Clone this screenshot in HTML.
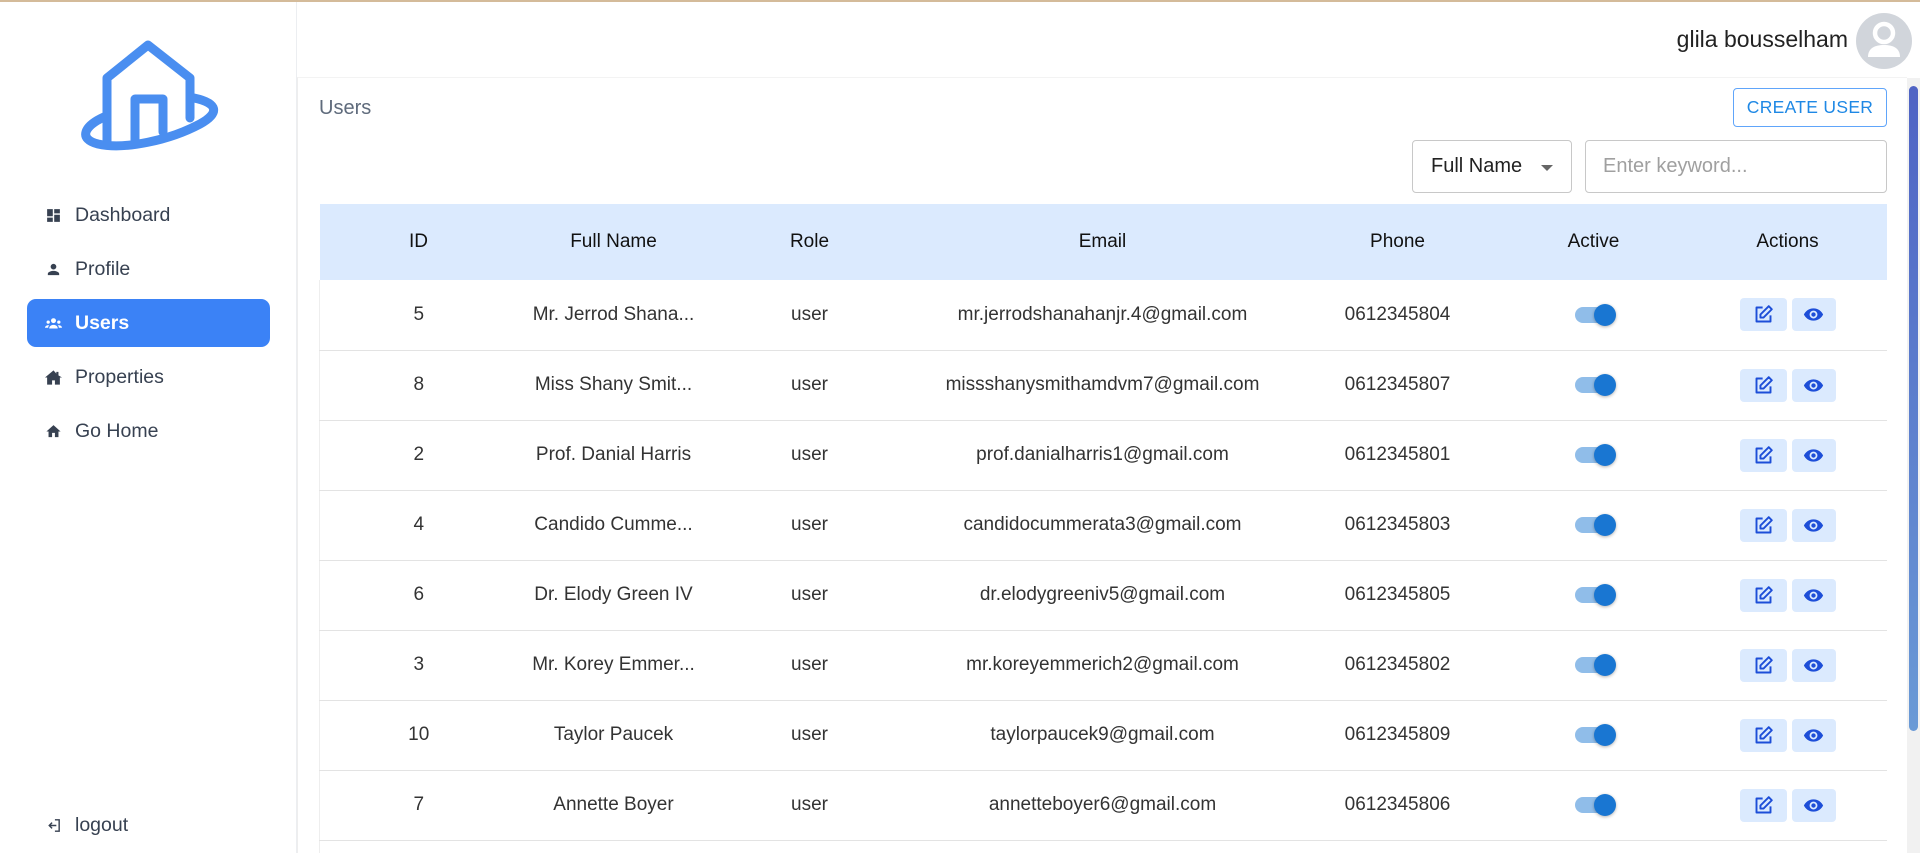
<!DOCTYPE html>
<html><head><meta charset="utf-8"><style>
*{box-sizing:border-box;margin:0;padding:0}
html,body{width:1920px;height:853px;overflow:hidden}
body{background:#fff;font-family:"Liberation Sans",sans-serif;position:relative}
.top{position:absolute;left:0;top:0;width:1920px;height:2px;background:#d4bb9a}
.side{position:absolute;left:0;top:2px;width:297px;height:851px;border-right:1px solid #eceef1;background:#fff}
.nav{position:absolute;left:27px;width:243px;height:48px;border-radius:9px;color:#374151;font-size:19.5px;display:flex;align-items:center;padding-left:18px}
.nav svg{width:17px;height:17px;margin-right:13px;fill:#374151}
.nav.act{background:#3b82f6;color:#fff;font-weight:bold}
.nav.act svg{fill:#fff}
.panel{position:absolute;left:297px;top:77px;width:1610px;height:776px;border-left:1px solid #eee;border-top:1px solid #f3f3f3}
.title{position:absolute;left:319px;top:97px;font-size:20px;color:#5f6b7c}
.btn{position:absolute;left:1733px;top:88px;width:154px;height:39px;border:1px solid #60a5fa;border-radius:4px;color:#1e88e5;font-size:17.5px;display:flex;align-items:center;justify-content:center;letter-spacing:.3px}
.sel{position:absolute;left:1412px;top:140px;width:160px;height:53px;border:1px solid #c8c8c8;border-radius:4px;font-size:20px;color:#222;padding:14px 0 0 18px}
.sel:after{content:"";position:absolute;right:18px;top:24px;border:6px solid transparent;border-top:6px solid #666}
.inp{position:absolute;left:1585px;top:140px;width:302px;height:53px;border:1px solid #c8c8c8;border-radius:4px;font-size:20px;color:#a0a0a0;padding:14px 0 0 17px}
.tw{position:absolute;left:319px;top:204px;width:1568px;height:649px;overflow:hidden}
table{width:1568px;border-collapse:collapse;table-layout:fixed;font-size:19px;color:#333}
thead tr{background:#dbeafe;height:76px}
th{font-weight:normal;color:#111;font-size:19px}
td{text-align:center;height:70px;border-bottom:1px solid #e3e3e3;white-space:nowrap}
tbody tr td:first-child{border-left:1px solid #eee}
.tg{display:inline-block;position:relative;width:38px;height:16px;border-radius:8px;background:#90bde9;vertical-align:middle}
.tg:after{content:"";position:absolute;right:-3px;top:-3px;width:22px;height:22px;border-radius:50%;background:#1976d2;box-shadow:0 1px 3px rgba(0,0,0,.3)}
.ab{display:inline-flex;align-items:center;justify-content:center;height:33px;background:#dbeafe;border-radius:4px;vertical-align:middle}
.ab svg{width:21px;height:21px}
.sb{position:absolute;left:1907px;top:78px;width:13px;height:775px;background:#f1f1f1}
.sb div{position:absolute;left:2px;top:8px;width:9px;height:645px;border-radius:5px;background:linear-gradient(#4f63c4,#6a9ad6)}
</style></head><body>
<div class="top"></div>
<div class="side">
<svg style="position:absolute;left:0;top:-2px" width="297" height="200" viewBox="0 0 297 200">
<g fill="none" stroke="#4a8ef0" stroke-width="9" stroke-linejoin="round" stroke-linecap="round">
<path d="M107 142 V78 L148 45 L190 78 V118"/>
<path d="M135 140 V99 H163 V132"/>
<path d="M194 98 C218 103 220 113 200 124 C170 140 125 150 98 144 C78 139 84 126 104 117"/>
</g></svg>
<div class="nav" style="top:189px"><svg viewBox="0 0 24 24"><path d="M3 13h8V3H3zm0 8h8v-6H3zm10 0h8V11h-8zm0-18v6h8V3z"/></svg>Dashboard</div>
<div class="nav" style="top:243px"><svg viewBox="0 0 24 24"><path d="M12 12c2.2 0 4-1.8 4-4s-1.8-4-4-4-4 1.8-4 4 1.8 4 4 4zm0 2c-2.7 0-8 1.3-8 4v2h16v-2c0-2.7-5.3-4-8-4z"/></svg>Profile</div>
<div class="nav act" style="top:297px"><svg viewBox="0 0 24 24"><circle cx="12" cy="8" r="3.5"/><circle cx="4.5" cy="10" r="2.3"/><circle cx="19.5" cy="10" r="2.3"/><path d="M6 19c0-3.5 3-5 6-5s6 1.5 6 5z M0 18c0-2 2-3.5 4.5-3.5 1 0 1.5.2 1.5.2C4.5 16 4.5 17 4.5 18z M24 18c0-2-2-3.5-4.5-3.5-1 0-1.5.2-1.5.2 1.5 1.3 1.5 2.3 1.5 3.3z"/></svg>Users</div>
<div class="nav" style="top:351px"><svg viewBox="0 0 24 24"><path d="M12 2 0 12h3v10h7v-6h4v6h7V12h3L19 9V4h-3v2.5z"/></svg>Properties</div>
<div class="nav" style="top:405px"><svg viewBox="0 0 24 24"><path d="M10 20v-6h4v6h5v-8h3L12 3 2 12h3v8z"/></svg>Go Home</div>
<div class="nav" style="top:799px"><svg viewBox="0 0 24 24" style="fill:none;stroke:#374151;stroke-width:2"><path d="M14 4h6v16h-6 M10 8l-4 4 4 4 M6 12h10"/></svg>logout</div>
</div>
<div style="position:absolute;right:72px;top:26px;font-size:23px;color:#222">glila bousselham</div>
<svg style="position:absolute;left:1856px;top:13px" width="56" height="56" viewBox="0 0 56 56"><circle cx="28" cy="28" r="28" fill="#d1d5db"/><circle cx="28" cy="20" r="9" fill="none" stroke="#fff" stroke-width="4.5"/><path d="M12 44c0-9 7-12 16-12s16 3 16 12z" fill="#fff"/></svg>
<div class="panel"></div>
<div class="title">Users</div>
<div class="btn">CREATE USER</div>
<div class="sel">Full Name</div>
<div class="inp">Enter keyword...</div>
<div class="tw">
<table>
<colgroup><col style="width:198px"><col style="width:192px"><col style="width:200px"><col style="width:386px"><col style="width:204px"><col style="width:188px"><col style="width:200px"></colgroup>
<thead><tr><th>ID</th><th>Full Name</th><th>Role</th><th>Email</th><th>Phone</th><th>Active</th><th>Actions</th></tr></thead>
<tbody>
<tr><td>5</td><td>Mr. Jerrod Shana...</td><td>user</td><td>mr.jerrodshanahanjr.4@gmail.com</td><td>0612345804</td><td><span class="tg"></span></td><td>ACT</td></tr>
<tr><td>8</td><td>Miss Shany Smit...</td><td>user</td><td>missshanysmithamdvm7@gmail.com</td><td>0612345807</td><td><span class="tg"></span></td><td>ACT</td></tr>
<tr><td>2</td><td>Prof. Danial Harris</td><td>user</td><td>prof.danialharris1@gmail.com</td><td>0612345801</td><td><span class="tg"></span></td><td>ACT</td></tr>
<tr><td>4</td><td>Candido Cumme...</td><td>user</td><td>candidocummerata3@gmail.com</td><td>0612345803</td><td><span class="tg"></span></td><td>ACT</td></tr>
<tr><td>6</td><td>Dr. Elody Green IV</td><td>user</td><td>dr.elodygreeniv5@gmail.com</td><td>0612345805</td><td><span class="tg"></span></td><td>ACT</td></tr>
<tr><td>3</td><td>Mr. Korey Emmer...</td><td>user</td><td>mr.koreyemmerich2@gmail.com</td><td>0612345802</td><td><span class="tg"></span></td><td>ACT</td></tr>
<tr><td>10</td><td>Taylor Paucek</td><td>user</td><td>taylorpaucek9@gmail.com</td><td>0612345809</td><td><span class="tg"></span></td><td>ACT</td></tr>
<tr><td>7</td><td>Annette Boyer</td><td>user</td><td>annetteboyer6@gmail.com</td><td>0612345806</td><td><span class="tg"></span></td><td>ACT</td></tr>
<tr><td></td><td></td><td></td><td></td><td></td><td></td><td></td></tr>
</tbody></table>
</div>
<div class="sb"><div></div></div>
<script>
var a='<span class="ab" style="width:47px;margin-right:5px"><svg viewBox="0 0 24 24" fill="none" stroke="#1d4ed8" stroke-width="2.2" stroke-linejoin="round"><path d="M11 4H4v16h16v-7"/><path d="M18 2.5l3.5 3.5L12 15.5H8.5V12z"/></svg></span><span class="ab" style="width:44px"><svg viewBox="0 0 24 24"><path fill="#1d4ed8" d="M12 5C6.5 5 2.7 8.5 1 12c1.7 3.5 5.5 7 11 7s9.3-3.5 11-7c-1.7-3.5-5.5-7-11-7zm0 11.5a4.5 4.5 0 1 1 0-9 4.5 4.5 0 0 1 0 9zm0-7a2.5 2.5 0 1 0 0 5 2.5 2.5 0 0 0 0-5z"/></svg></span>';
document.querySelectorAll('td').forEach(function(t){if(t.textContent==='ACT')t.innerHTML=a;});
</script>
</body></html>
